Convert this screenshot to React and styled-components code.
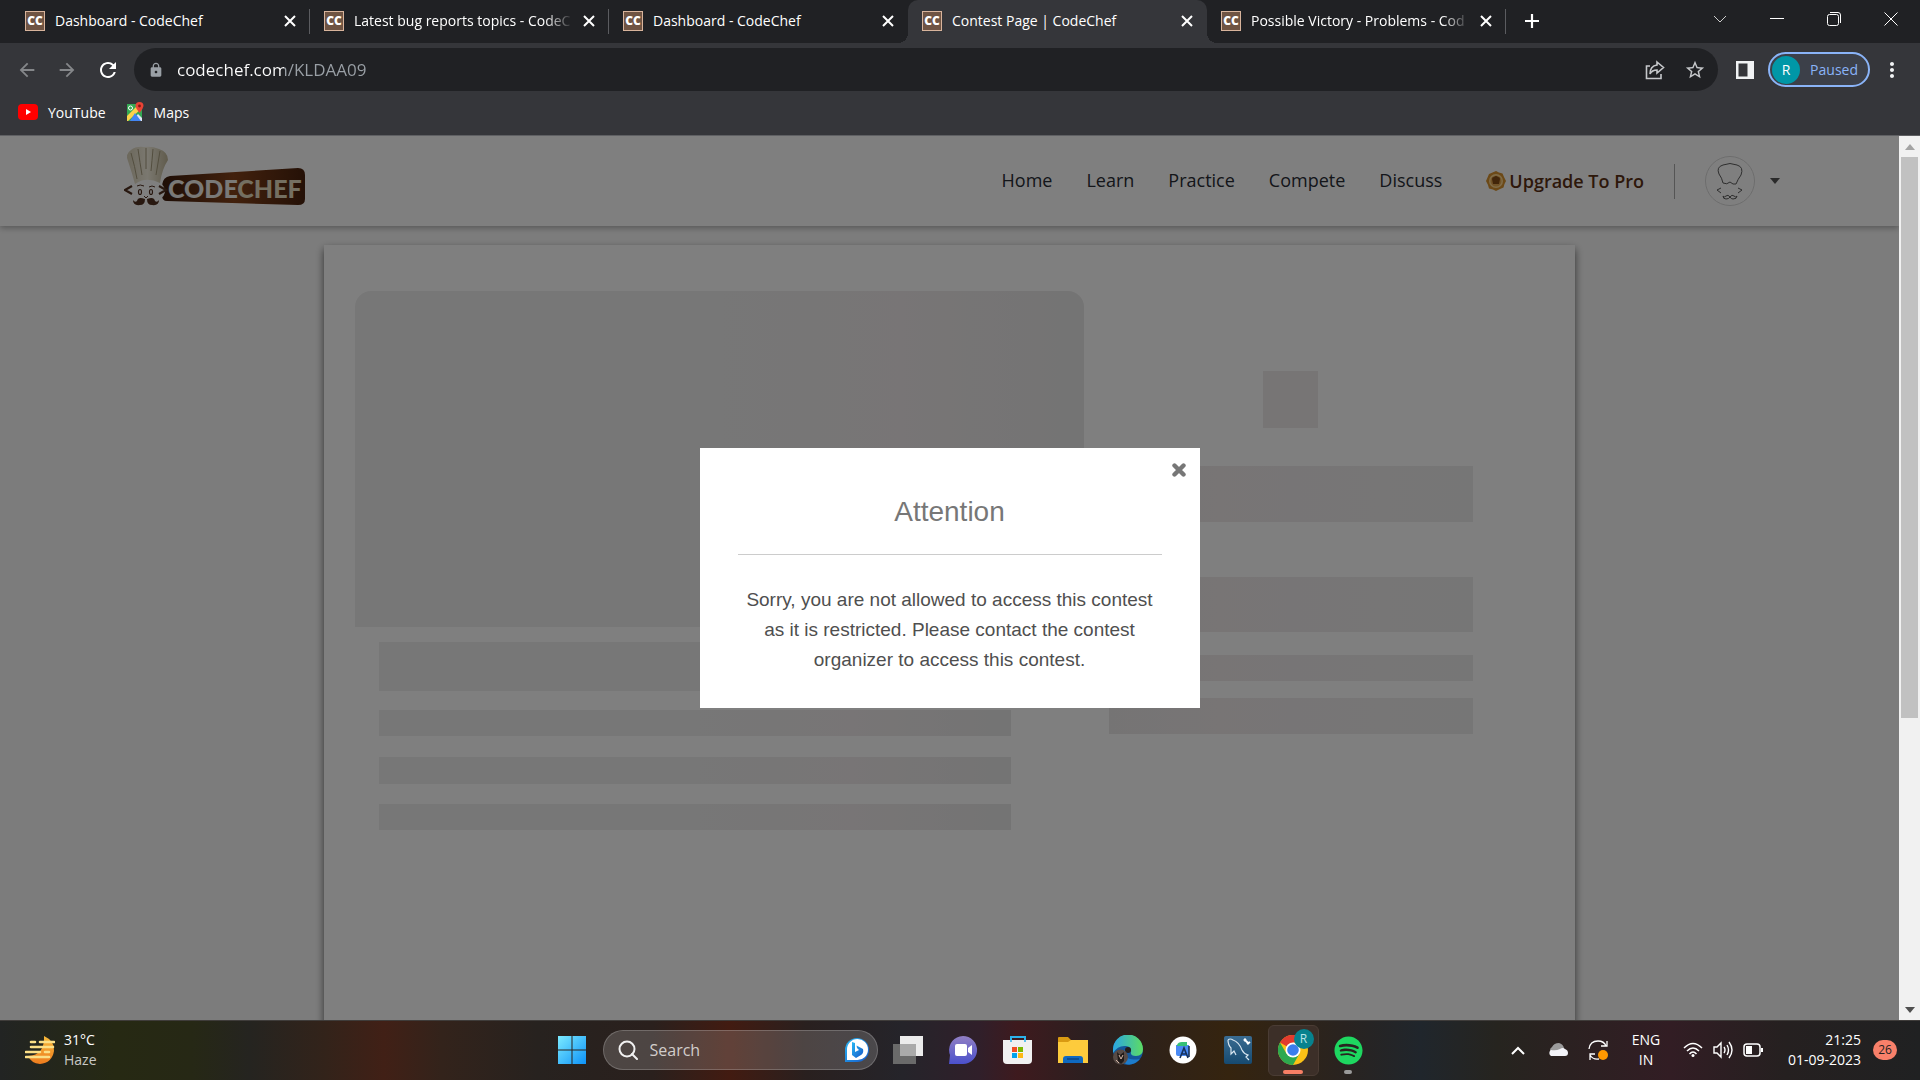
import React from 'react';
import styled, { createGlobalStyle } from 'styled-components';
import { MdArrowBack, MdArrowForward, MdRefresh, MdLock, MdStarBorder, MdMoreVert } from 'react-icons/md';
import { FaSpotify } from 'react-icons/fa';

const tabs = [
  { title: 'Dashboard - CodeChef' },
  { title: 'Latest bug reports topics - CodeC', fade: true },
  { title: 'Dashboard - CodeChef', last: true },
  { title: 'Contest Page | CodeChef', active: true },
  { title: 'Possible Victory - Problems - Cod', fade: true },
];

const links = ['Home', 'Learn', 'Practice', 'Compete', 'Discuss'];

function ChefLogo() {
  return (
    <svg width="182" height="62" viewBox="0 0 182 62" role="img" aria-label="CodeChef">
      <defs>
        <linearGradient id="plate" x1="0" x2="1" y1="0" y2="0">
          <stop offset="0" stopColor="#3c1c0c" />
          <stop offset="0.5" stopColor="#84421a" />
          <stop offset="1" stopColor="#4a220e" />
        </linearGradient>
        <linearGradient id="hat" x1="0" x2="1" y1="0" y2="0">
          <stop offset="0" stopColor="#d8d0b8" />
          <stop offset="0.5" stopColor="#f6f1e0" />
          <stop offset="1" stopColor="#c0b698" />
        </linearGradient>
      </defs>
      <path d="M46 31 L174 23 Q181 23 181 30 V54 Q181 60 174 60 L43 56 Q38 56 38 50 V40 Q39 32 46 31Z" fill="url(#plate)" />
      <ellipse cx="22" cy="46" rx="19" ry="12" fill="#fff" />
      <path d="M11 39 Q8 28 4 16 Q1 9 7 5 Q12 1 20 2 Q28 1 35 4 Q44 7 44 15 Q38 24 36 38 Q22 31 11 39Z" fill="url(#hat)" />
      <path d="M7 8 Q11 22 13 34 M14 4 Q16 18 18 30 M22 3 V24 M29 4 Q28 16 27 26 M36 6 Q34 18 32 30" fill="none" stroke="#a69c7e" strokeWidth="1" />
      <path d="M8 41 L1 45 L8 49 M35 41 L42 45 L35 49" fill="none" stroke="#503020" strokeWidth="2.200" />
      <path d="M13 41 Q16 39 20 41 M25 42 Q28 40 31 42" fill="none" stroke="#503020" strokeWidth="1" />
      <ellipse cx="16" cy="47" rx="1.500" ry="2.500" fill="none" stroke="#503020" strokeWidth="1.200" />
      <ellipse cx="27" cy="47" rx="1.500" ry="2.500" fill="none" stroke="#503020" strokeWidth="1.200" />
      <path d="M20 51 L22 53 L24 51" fill="none" stroke="#503020" strokeWidth="1" />
      <path d="M21 54 Q14 51 13 56 Q11 58 9 55 Q9 61 16 60 Q21 60 21 54Z M23 54 Q30 51 31 56 Q33 58 35 55 Q35 61 28 60 Q23 60 23 54Z" fill="#503020" />
      <text x="44" y="53" fontFamily="Lato, sans-serif" fontWeight="900" fontSize="25" fill="#f4f2ee">
        CODE<tspan fill="#e8dfc2">CHEF</tspan>
      </text>
    </svg>
  );
}

function ChefAvatar() {
  return (
    <svg width="50" height="50" viewBox="0 0 50 50" fill="none" stroke="#5c5c5c" strokeWidth="1">
      <circle cx="25" cy="25" r="24.500" stroke="#dadada" strokeWidth="1" />
      <path d="M18 27 Q17 22 14 18 Q11 11 18 9 Q25 6 32 9 Q39 11 36 19 Q33 23 31 28 Q28 29 25 26 Q22 29 18 27Z" />
      <path d="M16 32 L12 34 L16 37 M33 32 L37 34 L33 37" />
      <path d="M18 40 Q19 42 21 40 Q23 38 25 41 Q27 38 29 40 Q31 42 32 40 Q32 43 28 43 Q26 43 25 41 Q24 43 21 43 Q18 43 18 40Z" />
    </svg>
  );
}

function Medal() {
  return (
    <svg width="20" height="20" viewBox="0 0 20 20">
      <path d="M10 0 L13 1.500 L16.500 2.500 L18 6 L20 10 L18.500 13 L17.500 16.500 L14 18 L10 20 L7 18.500 L3 17.500 L2 14 L0 10 L1.500 6.500 L3 3 L6.500 1.500Z" fill="#d8922e" />
      <circle cx="10" cy="10" r="7" fill="#ffd890" />
      <circle cx="10" cy="10" r="5.500" fill="#e4a850" />
      <path d="M6 8 Q6 6 8 6 Q10 4 12 6 Q14 6 14 8 L13 13 H7Z" fill="#854c14" />
    </svg>
  );
}

function ShareIcon() {
  return (
    <svg width="20" height="20" viewBox="0 0 20 20" fill="none" stroke="#c6c8cb" strokeWidth="1.600">
      <path d="M5 6 H1.500 V18.500 H16 V14" />
      <path d="M12 2 L18.500 7.500 L12 13 V10 Q7 10 5 14 Q5 6 12 5Z" />
    </svg>
  );
}

function MapsIcon() {
  return (
    <svg width="18" height="20" viewBox="0 0 18 20">
      <path d="M1 2 H16 V19 H1Z" fill="#34a853" />
      <path d="M1 14 L13 2 L16 6 L2 19 H1Z" fill="#fbd24b" />
      <path d="M6 19 L12 12 L16 16 V19Z" fill="#dfe7f5" />
      <path d="M9 11 L15 19 H4Z" fill="#4285f4" />
      <circle cx="4.500" cy="6" r="2" fill="none" stroke="#fff" />
      <path d="M13.500 0 A4 4 0 0 1 17.500 4 Q17 7 13.500 11 Q10 7 9.500 4 A4 4 0 0 1 13.500 0Z" fill="#ea4335" />
      <circle cx="13.500" cy="4" r="1.400" fill="#801a12" />
    </svg>
  );
}

function WeatherIcon() {
  return (
    <svg width="30" height="30" viewBox="0 0 30 30">
      <defs>
        <linearGradient id="moon" x1="0" x2="0" y1="0" y2="1">
          <stop offset="0" stopColor="#f6b93a" />
          <stop offset="1" stopColor="#ee7c1e" />
        </linearGradient>
      </defs>
      <path d="M19 1 Q30 6 29 16 Q27 28 15 29 Q6 28 3 21 Q20 20 19 1Z" fill="url(#moon)" />
      <path d="M6 7 H10 M15 7 H29 M6 12 H28 M1 17 H15 M20 17 H24 M1 22 H24" stroke="#fbdf86" strokeWidth="2.600" strokeLinecap="round" />
    </svg>
  );
}

function WindowsIcon() {
  return (
    <svg width="30" height="30" viewBox="0 0 30 30">
      <defs>
        <linearGradient id="win" x1="0" x2="1" y1="0" y2="1">
          <stop offset="0" stopColor="#7cebff" />
          <stop offset="1" stopColor="#0d92f8" />
        </linearGradient>
      </defs>
      <path d="M1 1 H14.500 V14.500 H1Z M15.500 1 H29 V14.500 H15.500Z M1 15.500 H14.500 V29 H1Z M15.500 15.500 H29 V29 H15.500Z" fill="url(#win)" />
    </svg>
  );
}

function BingIcon() {
  return (
    <svg width="26" height="26" viewBox="0 0 26 26">
      <defs>
        <linearGradient id="bing" x1="0" x2="1" y1="0" y2="1">
          <stop offset="0" stopColor="#28b8f4" />
          <stop offset="1" stopColor="#1658c8" />
        </linearGradient>
      </defs>
      <path d="M1 25 V13 A12 12 0 1 1 13 25Z" fill="url(#bing)" />
      <path d="M3 23 V13 A10.500 10.500 0 1 1 13 23Z" fill="#fff" />
      <path d="M8 5 L11 6 V15 L15 13 L13 11 L12.500 8.500 L19 12 Q20 16 17 18 L12 21 L8 18Z" fill="url(#bing)" />
    </svg>
  );
}

function TaskViewIcon() {
  return (
    <svg width="30" height="30" viewBox="0 0 30 30">
      <path d="M7 1 H30 V21 H7Z" fill="#ececec" />
      <path d="M0 9 H23 V29 H0Z" fill="#6a6a6a" />
      <path d="M7 9 H23 V21 H7Z" fill="#aaa" />
    </svg>
  );
}

function ChatIcon() {
  return (
    <svg width="30" height="30" viewBox="0 0 30 30">
      <defs>
        <linearGradient id="chat" x1="0" x2="0" y1="0" y2="1">
          <stop offset="0" stopColor="#917fc4" />
          <stop offset="1" stopColor="#4b50cc" />
        </linearGradient>
      </defs>
      <path d="M1 29 L2 20 A14 14 0 1 1 15 29Z" fill="url(#chat)" />
      <rect x="7" y="9" width="12" height="12" rx="2" fill="#fff" />
      <path d="M20 13 L24 10 V20 L20 17Z" fill="#fff" />
    </svg>
  );
}

function StoreIcon() {
  return (
    <svg width="30" height="30" viewBox="0 0 30 30">
      <path d="M8 7 V2 H22 V7" fill="none" stroke="#2cb1ea" strokeWidth="2" />
      <path d="M0 5 H29 V25 Q29 29 25 29 H4 Q0 29 0 25Z" fill="#f1f1f1" />
      <path d="M8 3 V7 M22 3 V7" stroke="#2cb1ea" strokeWidth="1.500" />
      <path d="M9 12 H14 V17 H9Z" fill="#f04e23" />
      <path d="M15 12 H20 V17 H15Z" fill="#7db900" />
      <path d="M9 18 H14 V23 H9Z" fill="#00a2ed" />
      <path d="M15 18 H20 V23 H15Z" fill="#fdb813" />
    </svg>
  );
}

function FolderIcon() {
  return (
    <svg width="30" height="30" viewBox="0 0 30 30">
      <path d="M0 3 Q0 2 1 2 H10 L13 5 H30 V12 H0Z" fill="#d99a12" />
      <path d="M0 7 H10 L13 5 H30 V28 H0Z" fill="#fdcb3c" />
      <path d="M5 28 V24 Q5 21 8 21 H22 Q25 21 25 24 V28Z" fill="#0f69c0" />
      <path d="M9 24 H21" stroke="#083c74" strokeWidth="1.200" />
    </svg>
  );
}

function EdgeIcon() {
  return (
    <svg width="30" height="30" viewBox="0 0 30 30">
      <defs>
        <linearGradient id="edge" x1="0" x2="1" y1="0" y2="0">
          <stop offset="0" stopColor="#2aa6e4" />
          <stop offset="1" stopColor="#5ddc62" />
        </linearGradient>
      </defs>
      <circle cx="15" cy="15" r="15" fill="#14579c" />
      <path d="M0 15 A15 15 0 0 1 30 14 Q30 21 23 21 Q17 21 18 17 Q19 12 13 11 Q5 10 0 18Z" fill="url(#edge)" />
      <path d="M12 15 Q10 27 27 24 Q21 31 13 29 Q7 25 8 18Z" fill="#1d7ccc" />
      <circle cx="15" cy="15" r="3" fill="#241d1a" />
      <circle cx="7.500" cy="22" r="7.500" fill="#574b46" />
      <path d="M4 17 L7 20 L11 17 V26 L8 29 L5 26Z" fill="#201a18" />
      <path d="M6 20 L8 24 L10 20 M3 25 L6 28" stroke="#d3b6a5" fill="none" />
    </svg>
  );
}

function StudioIcon() {
  return (
    <svg width="28" height="28" viewBox="0 0 28 28">
      <circle cx="14" cy="14" r="13.500" fill="#fff" />
      <path d="M7 9 H20 V20 H9 Q7 20 7 18Z" fill="#4a8af4" />
      <path d="M8 9 Q9 6 13 6 H18 V10 H8Z" fill="#36c079" />
      <path d="M11 22 L15 12 L19 22 M13 18 H17 M20 10 V21" stroke="#17325c" strokeWidth="1.600" fill="none" />
    </svg>
  );
}

function MysqlIcon() {
  return (
    <svg width="28" height="28" viewBox="0 0 28 28">
      <defs>
        <linearGradient id="sql" x1="0" x2="0" y1="0" y2="1">
          <stop offset="0" stopColor="#3a6c92" />
          <stop offset="1" stopColor="#164a70" />
        </linearGradient>
      </defs>
      <rect width="28" height="28" rx="2" fill="url(#sql)" />
      <path d="M4 4 Q6 2 9 4 Q15 6 18 14 Q20 18 24 19 L22 21 L25 24 M4 4 Q4 9 7 12 L7 18 L10 15 L12 19" fill="none" stroke="#d8e6f0" strokeWidth="1.200" />
      <path d="M20 3 L25 8 M20 5 L22 3 M23 8 L26 6" stroke="#fff" strokeWidth="2" />
    </svg>
  );
}

function ChromeIcon() {
  return (
    <svg width="30" height="30" viewBox="0 0 30 30">
      <circle cx="15" cy="15" r="15" fill="#fbc116" />
      <path d="M15 15 L2 7.500 A15 15 0 0 1 28 7.500 H15Z" fill="#e33b2e" />
      <path d="M2 7.500 A15 15 0 0 0 15 30 L21.500 18.500 L15 15 L8.500 18.700Z" fill="#2da94f" />
      <circle cx="15" cy="15" r="7.500" fill="#fff" />
      <circle cx="15" cy="15" r="5.800" fill="#3b7ded" />
    </svg>
  );
}

const apps = [
  { name: 'Task view', icon: <TaskViewIcon /> },
  { name: 'Chat', icon: <ChatIcon /> },
  { name: 'Microsoft Store', icon: <StoreIcon /> },
  { name: 'File Explorer', icon: <FolderIcon /> },
  { name: 'Edge', icon: <EdgeIcon /> },
  { name: 'Android Studio', icon: <StudioIcon /> },
  { name: 'MySQL Workbench', icon: <MysqlIcon /> },
  { name: 'Chrome', icon: <ChromeIcon />, current: true },
  { name: 'Spotify', icon: <FaSpotify size={29} color="#1ed760" />, open: true },
];

function App() {
  return (
    <Screen>
      <GlobalStyle />
      <TabStrip>
        {tabs.map((tab, i) => (
          <Tab key={i} $active={tab.active} $last={tab.last}>
            <Favicon>CC</Favicon>
            <TabTitle $fade={tab.fade}>{tab.title}</TabTitle>
            <IconButton $size={20} aria-label="Close tab">
              <svg width="12" height="12" viewBox="0 0 12 12" stroke="#fff" strokeWidth="2">
                <path d="M1 1 L11 11 M11 1 L1 11" />
              </svg>
            </IconButton>
          </Tab>
        ))}
        <NewTab aria-label="New tab">
          <svg width="14" height="14" viewBox="0 0 14 14" stroke="#fff" strokeWidth="2.200">
            <path d="M7 0 V14 M0 7 H14" />
          </svg>
        </NewTab>
        <WindowControls>
          <WindowButton aria-label="Search tabs">
            <svg width="14" height="8" viewBox="0 0 14 8" fill="none" stroke="#ccc"><path d="M1 1 L7 7 L13 1" /></svg>
          </WindowButton>
          <WindowButton aria-label="Minimize">
            <svg width="14" height="2" viewBox="0 0 14 2" fill="#fff"><path d="M0 0 H14 V1 H0Z" /></svg>
          </WindowButton>
          <WindowButton aria-label="Restore">
            <svg width="14" height="14" viewBox="0 0 14 14" fill="none" stroke="#fff">
              <rect x="0.500" y="2.500" width="11" height="11" rx="2" />
              <path d="M3 0.500 H11 Q13.500 0.500 13.500 3 V11" />
            </svg>
          </WindowButton>
          <WindowButton aria-label="Close">
            <svg width="14" height="14" viewBox="0 0 14 14" stroke="#fff"><path d="M0.500 0.500 L13.500 13.500 M13.500 0.500 L0.500 13.500" /></svg>
          </WindowButton>
        </WindowControls>
      </TabStrip>

      <Toolbar>
        <NavButtons>
          <IconButton $size={22} $color="#85878a" aria-label="Back"><MdArrowBack size={22} /></IconButton>
          <IconButton $size={22} $color="#85878a" aria-label="Forward"><MdArrowForward size={22} /></IconButton>
          <IconButton $size={24} $color="#fff" aria-label="Reload"><MdRefresh size={24} /></IconButton>
        </NavButtons>
        <AddressBar>
          <MdLock size={16} color="#9aa0a6" />
          <Address aria-label="Address" defaultValue="codechef.com/KLDAA09" spellCheck={false} />
          <IconButton $size={22} aria-label="Share"><ShareIcon /></IconButton>
          <IconButton $size={22} $color="#c6c8cb" aria-label="Bookmark"><MdStarBorder size={22} /></IconButton>
        </AddressBar>
        <IconButton $size={18} aria-label="Side panel">
          <svg width="18" height="18" viewBox="0 0 18 18"><path d="M0 0 H18 V18 H0Z M2.500 2.500 V15.500 H11.500 V2.500Z" fill="#f1f3f4" fillRule="evenodd" /></svg>
        </IconButton>
        <Profile>
          <Initial>R</Initial>
          Paused
        </Profile>
        <IconButton $size={16} $color="#f1f3f4" aria-label="Menu"><MdMoreVert size={24} /></IconButton>
      </Toolbar>

      <Bookmarks>
        <Bookmark href="#youtube">
          <svg width="20" height="20" viewBox="0 0 20 20"><rect y="2" width="20" height="16" rx="4" fill="#f00" /><path d="M8 7 L13 10 L8 13Z" fill="#fff" /></svg>
          YouTube
        </Bookmark>
        <Bookmark href="#maps">
          <MapsIcon />
          Maps
        </Bookmark>
      </Bookmarks>

      <Viewport>
        <Page>
          <Header>
            <LogoLink href="#home" aria-label="CodeChef"><ChefLogo /></LogoLink>
            <Nav>
              {links.map((link) => <NavLink key={link} href={'#' + link}>{link}</NavLink>)}
            </Nav>
            <Upgrade href="#pro"><Medal />Upgrade To Pro</Upgrade>
            <Account aria-label="Account">
              <ChefAvatar />
              <svg width="10" height="6" viewBox="0 0 10 6"><path d="M0 0 H10 L5 6Z" fill="#555" /></svg>
            </Account>
          </Header>
          <Card>
            <Column>
              <Banner />
              <Lines>
                <Bar $height={49} />
                <Bar $height={26} $top={19} />
                <Bar $height={27} $top={21} />
                <Bar $height={26} $top={20} />
              </Lines>
            </Column>
            <Side>
              <Square />
              <Bar $pink $height={56} $top={38} />
              <Bar $pink $height={55} $top={55} />
              <Bar $pink $height={26} $top={23} />
              <Bar $pink $height={36} $top={17} />
            </Side>
          </Card>
          <Overlay>
            <Modal role="dialog" aria-labelledby="modal-title">
              <CloseButton aria-label="Close">
                <svg width="14" height="14" viewBox="0 0 14 14" stroke="#777" strokeWidth="4.400" strokeLinecap="round">
                  <path d="M2.500 2.500 L11.500 11.500 M11.500 2.500 L2.500 11.500" />
                </svg>
              </CloseButton>
              <ModalTitle id="modal-title">Attention</ModalTitle>
              <ModalText>
                Sorry, you are not allowed to access this contest as it is restricted. Please contact the contest organizer to access this contest.
              </ModalText>
            </Modal>
          </Overlay>
        </Page>
        <Scrollbar>
          <ScrollArrow aria-label="Scroll up">
            <svg width="10" height="6" viewBox="0 0 10 6"><path d="M0 6 H10 L5 0Z" fill="#a3a3a3" /></svg>
          </ScrollArrow>
          <ScrollTrack><Thumb /></ScrollTrack>
          <ScrollArrow aria-label="Scroll down">
            <svg width="10" height="6" viewBox="0 0 10 6"><path d="M0 0 H10 L5 6Z" fill="#505050" /></svg>
          </ScrollArrow>
        </Scrollbar>
      </Viewport>

      <Taskbar>
        <Weather>
          <WeatherIcon />
          <span>31°C<Faded>Haze</Faded></span>
        </Weather>
        <Dock>
          <AppButton aria-label="Start"><WindowsIcon /></AppButton>
          <SearchBox>
            <svg width="20" height="20" viewBox="0 0 20 20" fill="none" stroke="#f1f1f1" strokeWidth="2">
              <circle cx="9" cy="9" r="7.500" />
              <path d="M14 14 L19 19" strokeLinecap="round" />
            </svg>
            <SearchInput aria-label="Search" placeholder="Search" />
            <BingIcon />
          </SearchBox>
          {apps.map((app) => (
            <AppButton key={app.name} aria-label={app.name} $current={app.current} $open={app.open}>
              {app.icon}
              {app.current && <AppBadge>R</AppBadge>}
            </AppButton>
          ))}
        </Dock>
        <Tray>
          <TrayButton aria-label="Hidden icons">
            <svg width="14" height="9" viewBox="0 0 14 9" fill="none" stroke="#fff" strokeWidth="2"><path d="M1 8 L7 2 L13 8" /></svg>
          </TrayButton>
          <TrayButton aria-label="OneDrive">
            <svg width="20" height="14" viewBox="0 0 20 14">
              <path d="M4 11 A4 4 0 0 1 4 4 Q6 0 11 0 Q15 1 16 5 V10Z" fill="#9b9b9b" />
              <path d="M3 13 A3.500 3.500 0 0 1 3 7 Q8 8 12 6 Q15 4 17 6 Q20 7 20 10 Q20 13 17 13Z" fill="#f3f3f8" />
            </svg>
          </TrayButton>
          <TrayButton aria-label="Update">
            <svg width="20" height="20" viewBox="0 0 20 20" fill="none" stroke="#fff" strokeWidth="1.300">
              <path d="M1 9 Q2 1 10 1 Q16 1 18 6 M19 1 V6 H13 M2 20 V14 H7 M2 15 Q5 20 11 19" />
              <circle cx="15" cy="15" r="5" fill="#ff9800" stroke="none" />
            </svg>
          </TrayButton>
          <Language>ENG<br />IN</Language>
          <Status aria-label="Network, volume and battery">
            <svg width="20" height="16" viewBox="0 0 20 16" fill="none" stroke="#fff" strokeWidth="1.500">
              <path d="M1 6 Q10 -3 19 6 M4 9 Q10 3 16 9 M6.500 12 Q10 8 13.500 12" />
              <circle cx="10" cy="13.500" r="1.500" fill="#fff" stroke="none" />
            </svg>
            <svg width="20" height="18" viewBox="0 0 20 18" fill="none" stroke="#fff" strokeWidth="1.400">
              <path d="M1 6 H4 L8 2 V16 L4 12 H1Z M11 6 Q13 9 11 12 M14 4 Q17 9 14 14 M16 1 Q22 9 16 17" />
            </svg>
            <svg width="20" height="14" viewBox="0 0 20 14" fill="none" stroke="#fff" strokeWidth="1.500">
              <rect x="1" y="1" width="16" height="12" rx="3" />
              <path d="M3 3 H9 V11 H3Z" fill="#fff" stroke="none" />
              <path d="M19 5 V9" strokeWidth="2" />
            </svg>
          </Status>
          <Clock>21:25<br />01-09-2023</Clock>
          <Count>26</Count>
        </Tray>
      </Taskbar>
    </Screen>
  );
}

const GlobalStyle = createGlobalStyle`
  * { box-sizing: border-box; }
  body {
    margin: 0;
    font-family: "Open Sans", "Noto Sans", sans-serif;
    font-size: 14px;
  }
  button, input { font: inherit; }
  svg { flex-shrink: 0; display: block; }
`;

const Screen = styled.div`
  display: flex;
  flex-direction: column;
  height: 100vh;
  overflow: hidden;
  color: #fff;
`;

const IconButton = styled.button`
  display: flex;
  align-items: center;
  justify-content: center;
  flex-shrink: 0;
  width: ${(p) => p.$size}px;
  height: ${(p) => p.$size}px;
  padding: 0;
  border: 0;
  background: none;
  color: ${(p) => p.$color || '#fff'};
`;

const TabStrip = styled.div`
  display: flex;
  height: 43px;
  padding-left: 11px;
  background: #202124;
`;

const Tab = styled.div`
  position: relative;
  display: flex;
  align-items: center;
  flex: 0 1 299px;
  min-width: 0;
  padding: 0 10px 2px 14px;
  border-radius: 10px 10px 0 0;
  background: ${(p) => (p.$active ? '#35363a' : 'none')};
  &::after {
    content: "";
    position: absolute;
    right: 0;
    top: 9px;
    width: 1px;
    height: 25px;
    background: ${(p) => (p.$active || p.$last ? 'none' : '#5b5c60')};
  }
  &::before {
    content: "";
    display: ${(p) => (p.$active ? 'block' : 'none')};
    position: absolute;
    left: -10px;
    right: -10px;
    bottom: 0;
    height: 10px;
    background:
      radial-gradient(circle at 0 0, transparent 10px, #35363a 10px) left / 10px 10px no-repeat,
      radial-gradient(circle at 100% 0, transparent 10px, #35363a 10px) right / 10px 10px no-repeat;
  }
`;

const Favicon = styled.span`
  flex-shrink: 0;
  width: 20px;
  height: 20px;
  margin-right: 10px;
  border: 1px solid #d8b49c;
  background: #6f5443;
  color: #fff;
  font-size: 12px;
  font-weight: 800;
  line-height: 17px;
  text-align: center;
`;

const TabTitle = styled.span`
  flex: 1;
  min-width: 0;
  margin-right: 4px;
  white-space: nowrap;
  mask-image: ${(p) => (p.$fade ? 'linear-gradient(to right, #000 calc(100% - 30px), transparent calc(100% - 2px))' : 'none')};
`;

const NewTab = styled.button`
  width: 54px;
  padding: 0 20px 2px 19px;
  border: 0;
  background: none;
`;

const WindowControls = styled.div`
  display: flex;
  margin-left: auto;
`;

const WindowButton = styled.button`
  display: flex;
  align-items: center;
  justify-content: center;
  width: 57px;
  height: 37px;
  padding: 0 1px 0 0;
  border: 0;
  background: none;
`;

const Toolbar = styled.div`
  display: flex;
  align-items: center;
  gap: 14px;
  height: 48px;
  padding: 5px 20px 0 16px;
  background: #35363a;
`;

const NavButtons = styled.div`
  display: flex;
  align-items: center;
  gap: 18px;
`;

const AddressBar = styled.div`
  display: flex;
  align-items: center;
  flex: 1;
  gap: 18px;
  height: 43px;
  margin-right: 4px;
  padding: 0 12px 0 14px;
  border-radius: 22px;
  background: #202124;
`;

/* host part is white, path part is grey */
const Address = styled.input`
  flex: 1;
  min-width: 0;
  margin-left: -5px;
  padding: 0;
  border: 0;
  outline: 0;
  background: linear-gradient(to right, #fff 107px, #9aa0a6 107px);
  background-clip: text;
  color: transparent;
  font-size: 17px;
`;

const Profile = styled.button`
  display: flex;
  align-items: center;
  gap: 10px;
  height: 35px;
  padding: 0 10px 0 2px;
  border: 2px solid #8ab4f8;
  border-radius: 18px;
  background: #3c4049;
  color: #8ab4f8;
`;

const Initial = styled.span`
  width: 28px;
  height: 28px;
  border-radius: 50%;
  background: #0097a7;
  color: #fff;
  line-height: 28px;
`;

const Bookmarks = styled.div`
  display: flex;
  align-items: center;
  gap: 20px;
  height: 45px;
  padding: 0 18px 2px;
  border-bottom: 1px solid #5f6063;
  background: #35363a;
`;

const Bookmark = styled.a`
  display: flex;
  align-items: center;
  gap: 10px;
  color: #fff;
  text-decoration: none;
`;

const Viewport = styled.div`
  display: flex;
  flex: 1;
  min-height: 0;
`;

const Page = styled.div`
  position: relative;
  flex: 1;
  min-width: 0;
  overflow: hidden;
  background: #f9f9f9;
`;

const Header = styled.header`
  display: flex;
  align-items: center;
  height: 90px;
  padding: 0 119px 0 124px;
  background: #fff;
  box-shadow: 0 2px 6px rgba(0, 0, 0, 0.3);
`;

const LogoLink = styled.a`
  margin: 0 auto 10px 0;
`;

const Nav = styled.nav`
  display: flex;
  gap: 34px;
  padding-bottom: 2px;
`;

const NavLink = styled.a`
  color: #282c34;
  font-size: 18px;
  text-decoration: none;
`;

const Upgrade = styled.a`
  display: flex;
  align-items: center;
  gap: 3px;
  height: 35px;
  margin-left: 44px;
  padding-right: 30px;
  border-right: 1px solid #aaa;
  color: #5b3015;
  font-size: 18px;
  font-weight: 600;
  text-decoration: none;
`;

const Account = styled.button`
  display: flex;
  align-items: center;
  gap: 15px;
  margin-left: 30px;
  padding: 0;
  border: 0;
  background: none;
`;

const Card = styled.main`
  display: grid;
  grid-template-columns: 2fr 1fr;
  gap: 25px;
  max-width: 1251px;
  min-height: 1000px;
  margin: 19px auto 0;
  padding: 46px 102px 0 31px;
  background: #fff;
  box-shadow: 0 4px 8px rgba(0, 0, 0, 0.6);
`;

const Column = styled.div`
  min-width: 0;
`;

const Bar = styled.div`
  height: ${(p) => p.$height}px;
  margin-top: ${(p) => p.$top || 0}px;
  background: ${(p) => (p.$pink
    ? 'linear-gradient(to right, #ebe9e9, #f0eaeb 30%, #efebec 50%, #ededed)'
    : 'linear-gradient(to right, #eee 50%, #f0ebec 75%, #e8e8e8)')};
`;

const Banner = styled(Bar).attrs({ $height: 336 })`
  border-radius: 16px 16px 0 0;
`;

const Lines = styled.div`
  padding: 15px 73px 0 24px;
`;

const Side = styled.div`
  padding-top: 80px;
`;

const Square = styled.div`
  width: 55px;
  height: 57px;
  margin: 0 auto;
  background: #efeaeb;
`;

const Overlay = styled.div`
  position: absolute;
  inset: 0;
  display: flex;
  align-items: center;
  justify-content: center;
  background: rgba(0, 0, 0, 0.5);
`;

const Modal = styled.section`
  position: relative;
  width: 500px;
  padding: 38px;
  padding-bottom: 33px;
  background: #fff;
  font-family: "Liberation Sans", Arial, sans-serif;
  text-align: center;
`;

const CloseButton = styled.button`
  position: absolute;
  top: 15px;
  right: 14px;
  padding: 0;
  border: 0;
  background: none;
`;

const ModalTitle = styled.h2`
  margin: 0;
  padding: 9px 0 25px;
  border-bottom: 1px solid #ccc;
  color: #777;
  font-size: 28px;
  font-weight: 400;
  line-height: 34px;
`;

const ModalText = styled.p`
  margin: 30px 0 0;
  color: #4f4f4f;
  font-size: 19px;
  line-height: 30px;
`;

const Scrollbar = styled.div`
  display: flex;
  flex-direction: column;
  width: 21px;
  background: #f1f1f1;
`;

const ScrollArrow = styled.button`
  display: flex;
  align-items: center;
  justify-content: center;
  height: 21px;
  padding: 0;
  border: 0;
  background: none;
`;

const ScrollTrack = styled.div`
  flex: 1;
  padding: 0 2px;
`;

const Thumb = styled.div`
  height: 66.600%;
  background: #c1c1c1;
`;

const Taskbar = styled.footer`
  display: grid;
  grid-template-columns: 1fr auto 1fr;
  align-items: center;
  height: 60px;
  padding-bottom: 1px;
  border-top: 1px solid #3f3c3a;
  background: linear-gradient(to right, #222423, #262913 6%, #262815 10%, #252420 13%, #33231a 17%,
    #412016 20%, #33231b 23%, #27221f 28%, #2a201d 34%, #421b11 38%, #29201f 42%, #25242a 47%,
    #301f2a 51%, #3e1a1e 53%, #2a2020 57%, #35240f 64%, #292320 70%, #20262c 74%, #26241f 78%,
    #321d24 87%, #252020 93%, #202122);
`;

const Weather = styled.div`
  display: flex;
  align-items: center;
  gap: 9px;
  padding-left: 25px;
  line-height: 20px;
`;

const Faded = styled.span`
  display: block;
  color: #c8c8c5;
`;

const Dock = styled.div`
  display: flex;
  align-items: center;
`;

const AppButton = styled.button`
  position: relative;
  display: flex;
  align-items: center;
  justify-content: center;
  width: 51px;
  height: 51px;
  margin: 0 2px;
  padding: 0;
  border: 1px solid ${(p) => (p.$current ? '#4a3c34' : 'transparent')};
  border-radius: 6px;
  background: ${(p) => (p.$current ? '#3c2f28' : 'none')};
  &::after {
    content: "";
    position: absolute;
    bottom: 1px;
    width: ${(p) => (p.$current ? 20 : 8)}px;
    height: 4px;
    border-radius: 2px;
    background: ${(p) => (p.$current ? '#f77f65' : p.$open ? '#9a9a9a' : 'none')};
  }
`;

const AppBadge = styled.span`
  position: absolute;
  top: 3px;
  right: 4px;
  width: 20px;
  height: 20px;
  border-radius: 50%;
  background: #07828e;
  color: #b9e4e8;
  font-size: 12px;
  line-height: 20px;
`;

const SearchBox = styled.label`
  display: flex;
  align-items: center;
  gap: 12px;
  width: 275px;
  height: 40px;
  margin: 0 3px;
  padding: 0 7px 0 14px;
  border: 1px solid rgba(255, 255, 255, 0.2);
  border-radius: 20px;
  background: rgba(255, 255, 255, 0.17);
`;

const SearchInput = styled.input`
  flex: 1;
  min-width: 0;
  padding: 0;
  border: 0;
  outline: 0;
  background: none;
  color: #fff;
  font-size: 16px;
  &::placeholder { color: #d2cdcb; }
`;

const Tray = styled.div`
  display: flex;
  align-items: center;
  justify-content: flex-end;
  padding-right: 23px;
  line-height: 20px;
`;

const TrayButton = styled.button`
  display: flex;
  justify-content: center;
  width: 40px;
  padding: 0;
  border: 0;
  background: none;
`;

const Language = styled.div`
  width: 56px;
  text-align: center;
`;

const Status = styled.button`
  display: flex;
  align-items: center;
  gap: 10px;
  margin-left: 9px;
  padding: 0;
  border: 0;
  background: none;
`;

const Clock = styled.div`
  width: 98px;
  text-align: right;
`;

const Count = styled.span`
  width: 24px;
  height: 20px;
  margin-left: 12px;
  border-radius: 10px;
  background: #f8806a;
  color: #222;
  font-size: 12px;
  text-align: center;
`;

export default App;
